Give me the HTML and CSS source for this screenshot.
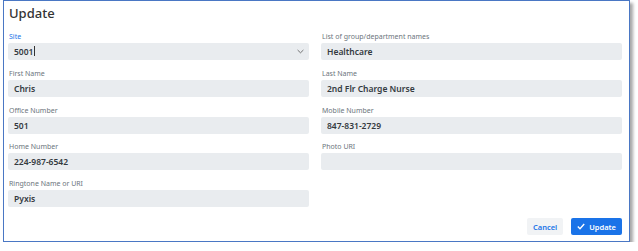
FILE: index.html
```html
<!DOCTYPE html>
<html lang="en">
<head>
    <meta charset="UTF-8">
    <title>Update</title>
    <link rel="stylesheet" href="styles.css">
</head>
<body>

    <div class="dialog">
        <h2 class="dialog-title">Update</h2>

        <div class="form-grid">
            <div class="field">
                <label class="field-label active">Site</label>
                <div class="select-wrap">
                    <div class="field-input">5001<span class="caret"></span></div>
                    <svg class="chevron" width="7" height="5" viewBox="0 0 7 5">
                        <path d="M0.6 1 L3.5 3.8 L6.4 1" fill="none" stroke="#555" stroke-width="0.8"/>
                    </svg>
                </div>
            </div>
            <div class="field">
                <label class="field-label">List of group/department names</label>
                <input class="field-input" type="text" value="Healthcare">
            </div>

            <div class="field">
                <label class="field-label">First Name</label>
                <input class="field-input" type="text" value="Chris">
            </div>
            <div class="field">
                <label class="field-label">Last Name</label>
                <input class="field-input" type="text" value="2nd Flr Charge Nurse">
            </div>

            <div class="field">
                <label class="field-label">Office Number</label>
                <input class="field-input" type="text" value="501">
            </div>
            <div class="field">
                <label class="field-label">Mobile Number</label>
                <input class="field-input" type="text" value="847-831-2729">
            </div>

            <div class="field">
                <label class="field-label">Home Number</label>
                <input class="field-input" type="text" value="224-987-6542">
            </div>
            <div class="field">
                <label class="field-label">Photo URI</label>
                <input class="field-input" type="text" value="">
            </div>

            <div class="field">
                <label class="field-label">Ringtone Name or URI</label>
                <input class="field-input" type="text" value="Pyxis">
            </div>
        </div>

        <div class="actions">
            <button class="btn btn-cancel">Cancel</button>
            <button class="btn btn-primary">
                <svg width="8" height="7" viewBox="0 0 8 7">
                    <path d="M0.8 3.6 L3 5.8 L7.2 1" fill="none" stroke="#fff" stroke-width="1.4"/>
                </svg>
                Update
            </button>
        </div>
    </div>

</body>
</html>
```

FILE: styles.css
```css
/* Page */
body {
    margin: 0;
    padding: 0;
    background: #fff;
    font-family: 'Noto Sans', 'Open Sans', sans-serif;
}

/* Dialog frame */
.dialog {
    box-sizing: border-box;
    width: 627px;
    height: 242px;
    margin-left: 3px;
    padding: 2px 7px 0 4px;
    border: 1px solid #4a77c4;
    background: #fff;
    box-shadow: 3px 3px 3px rgba(0, 0, 0, 0.35);
}

.dialog-title {
    margin: 0 0 8px 1px;
    font-size: 13px;
    line-height: 21px;
    font-weight: 500;
    color: #333;
}

/* Fields */
.form-grid {
    display: grid;
    grid-template-columns: 1fr 1fr;
    column-gap: 12px;
    row-gap: 8.75px;
}

.field {
    display: flex;
    flex-direction: column;
}

.field-label {
    font-size: 7px;
    line-height: 10px;
    margin-bottom: 1px;
    color: #6c757d;
    padding-left: 1px;
}
.field-label.active {
    color: #1a73e8;
}

.field-input {
    box-sizing: border-box;
    width: 100%;
    height: 17px;
    margin: 0;
    padding: 0 6px;
    border: none;
    border-radius: 2px;
    background: #e9ecef;
    font-family: inherit;
    font-size: 8.5px;
    font-weight: 600;
    line-height: 17px;
    color: #343a40;
    outline: none;
}

.select-wrap {
    position: relative;
}
.caret {
    display: inline-block;
    width: 0;
    height: 10px;
    border-left: 0.7px solid #333;
    vertical-align: -1px;
    margin-left: 0.5px;
}
.chevron {
    position: absolute;
    right: 5px;
    top: 6px;
}

/* Buttons */
.actions {
    display: flex;
    justify-content: flex-end;
    gap: 8px;
    margin-top: 11px;
}

.btn {
    display: flex;
    align-items: center;
    gap: 4px;
    height: 17px;
    padding: 0 6px;
    border: none;
    border-radius: 2px;
    font-family: inherit;
    font-size: 7.5px;
    font-weight: 600;
    cursor: pointer;
}
.btn-cancel {
    background: #f1f3f5;
    color: #1a73e8;
}
.btn-primary {
    background: #1a73e8;
    color: #fff;
}
```
